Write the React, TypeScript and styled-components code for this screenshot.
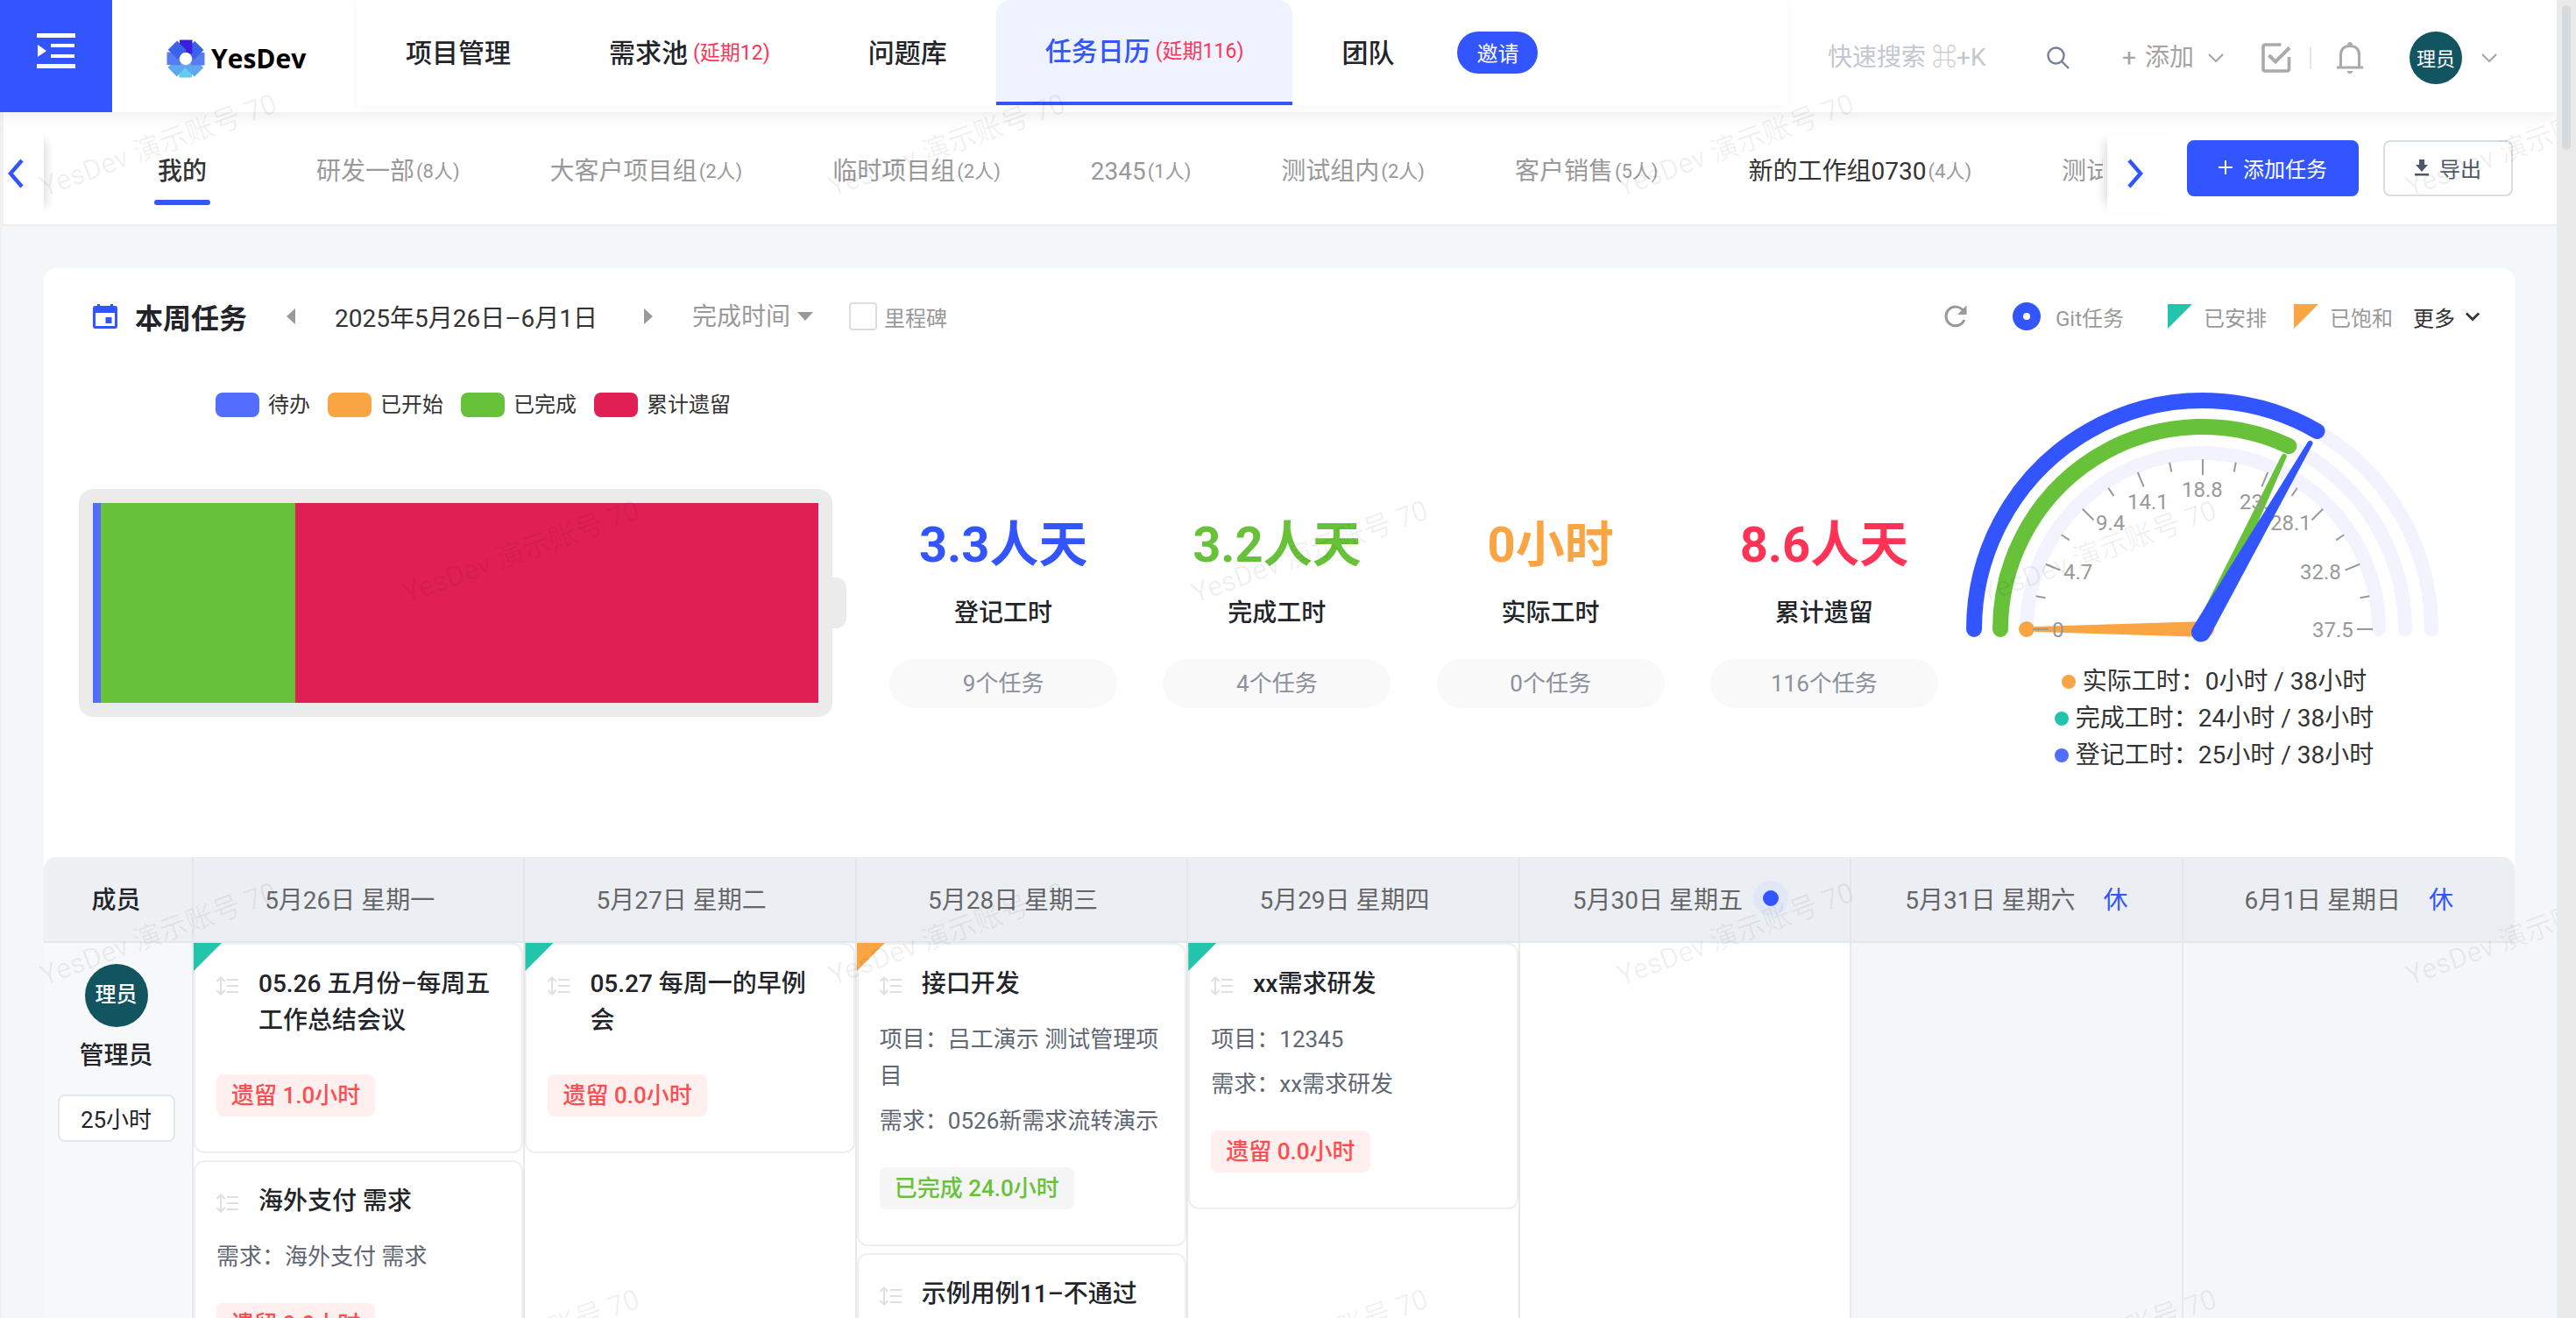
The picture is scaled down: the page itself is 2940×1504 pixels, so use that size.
import React from 'react';
import styled, { createGlobalStyle, css } from 'styled-components';

const BLUE = '#3355ff';
const GREEN = '#67c23a';
const ORANGE = '#f9a544';
const TEAL = '#22c4ab';
const RED = '#ff3355';

const GlobalStyle = createGlobalStyle`
  *, *::before, *::after { box-sizing: border-box; }
  html, body { margin: 0; padding: 0; }
  body {
    font-family: Roboto, "Noto Sans CJK SC", sans-serif;
    color: #222429;
    background: #f3f7fa;
    overflow: hidden;
  }
  button, input, select {
    font-family: inherit;
    margin: 0;
    padding: 0;
    border: 0;
    background: none;
    color: inherit;
  }
  button { cursor: pointer; }
  a { color: inherit; text-decoration: none; }
  svg { display: block; flex: none; }
`;

/* ---------- page frame ---------- */

const Shell = styled.div`
  position: relative;
  display: flex;
  height: 100vh;
  overflow: hidden;
`;

const Page = styled.div`
  flex: 1;
  min-width: 0;
  position: relative;
  overflow: hidden;
`;

const ScrollTrack = styled.div`
  flex: none;
  width: 22px;
  padding: 6px;
  background: #eaeaea;
`;

const ScrollThumb = styled.div`
  height: 165px;
  border-radius: 6px;
  background: #d5dade;
`;

/* ---------- header ---------- */

const Header = styled.header`
  position: relative;
  z-index: 2;
  display: flex;
  height: 128px;
  background: #fff;
  box-shadow: 0 4px 16px rgba(0, 0, 0, 0.08);
`;

const MenuButton = styled.button`
  display: flex;
  justify-content: center;
  width: 128px;
  padding-top: 36px;
  background: ${BLUE};
`;

const Logo = styled.a`
  display: flex;
  align-items: center;
  gap: 7px;
  width: 279px;
  padding: 6px 0 0 62px;
  font: 700 30px/40px "Open Sans", sans-serif;
  color: #000;
`;

const Nav = styled.nav`
  flex: 1;
  display: flex;
  align-items: flex-start;
  height: 120px;
  box-shadow: 0 2px 8px rgba(0, 0, 0, 0.04);
`;

const NavItem = styled.a<{ $active?: boolean }>`
  display: flex;
  align-items: center;
  gap: 6px;
  height: 120px;
  padding: 0 56px 4px;
  font-size: 30px;
  font-weight: 500;
  white-space: nowrap;
  ${p =>
    p.$active &&
    css`
      color: ${BLUE};
      background: #eff3ff;
      border-bottom: 4px solid ${BLUE};
      border-radius: 16px 16px 0 0;
    `}
`;

const Late = styled.span`
  font-size: 23px;
  font-weight: 400;
  color: ${RED};
`;

const InviteButton = styled.button`
  width: 92px;
  height: 48px;
  margin: 36px 0 0 16px;
  padding-bottom: 2px;
  border-radius: 24px;
  background: ${BLUE};
  color: #fff;
  font-size: 24px;
`;

const Tools = styled.div`
  display: flex;
  align-items: center;
  padding: 3px 68px 0 46px;
  color: #a3a3a3;
`;

const SearchInput = styled.input`
  width: 250px;
  height: 40px;
  font-size: 28px;
  outline: 0;
  &::placeholder { color: #c3c7ce; opacity: 1; }
`;

const IconButton = styled.button<{ $ml?: number }>`
  display: flex;
  align-items: center;
  margin-left: ${p => p.$ml ?? 0}px;
`;

const AddMenu = styled(IconButton)`
  gap: 16px;
  font-size: 28px;
  line-height: 40px;
`;

const AddText = styled.span`
  display: flex;
  gap: 10px;
`;

const Rule = styled.span`
  width: 2px;
  height: 26px;
  margin-left: 21px;
  background: #e4e7ed;
`;

const Avatar = styled.span<{ $size: number; $font: number }>`
  display: flex;
  align-items: center;
  justify-content: center;
  width: ${p => p.$size}px;
  height: ${p => p.$size}px;
  padding-bottom: 2px;
  border-radius: 50%;
  background: #125561;
  color: #fff;
  font-size: ${p => p.$font}px;
`;

/* ---------- group tabs ---------- */

const GroupBar = styled.div`
  display: flex;
  height: 130px;
  padding-right: 50px;
  background: #fff;
  border-left: 4px solid #f0f0f0;
  border-bottom: 2px solid #ededed;
`;

const ScrollArrow = styled.button<{ $side: 'left' | 'right' }>`
  flex: none;
  display: flex;
  align-items: center;
  width: ${p => (p.$side === 'left' ? 46 : 91)}px;
  height: 90px;
  margin-top: 25px;
  padding: 0 ${p => (p.$side === 'left' ? 4 : 22)}px;
  box-shadow: ${p => (p.$side === 'left' ? '10px 0 12px -8px' : '-10px 0 12px -8px')} rgba(0, 0, 0, 0.16);
`;

const Tabs = styled.div`
  flex: 1;
  min-width: 0;
  display: flex;
  overflow: hidden;
  padding: 47px 0 0 126px;
  margin-right: 5px;
`;

const Tab = styled.button<{ $active?: boolean; $dark?: boolean }>`
  flex: none;
  display: block;
  height: 60px;
  padding: 0 4px;
  margin-right: ${p => (p.$active ? 117 : 95)}px;
  font-size: 28px;
  line-height: 40px;
  font-weight: ${p => (p.$active ? 500 : 400)};
  color: ${p => (p.$active || p.$dark ? '#333' : '#999')};
  white-space: nowrap;
  &::after {
    content: '';
    display: block;
    height: 6px;
    margin: 12px -4px 0;
    border-radius: 3px;
    background: ${p => (p.$active ? BLUE : 'transparent')};
  }
`;

const Count = styled.span`
  margin-left: 2px;
  font-size: 22px;
  color: #999;
  vertical-align: 2px;
`;

const PrimaryButton = styled.button`
  flex: none;
  display: flex;
  align-items: center;
  justify-content: center;
  gap: 12px;
  width: 196px;
  height: 64px;
  margin-top: 32px;
  padding-bottom: 2px;
  border-radius: 8px;
  background: ${BLUE};
  color: #fff;
  font-size: 24px;
`;

const GhostButton = styled(PrimaryButton)`
  width: 148px;
  margin-left: 28px;
  border: 2px solid #d9dee3;
  background: #fff;
  color: #4f586b;
`;

/* ---------- week panel ---------- */

const Main = styled.main`
  padding: 48px 48px 0;
  border-left: 2px solid #f0f0f0;
`;

const Panel = styled.section`
  border-radius: 14px 14px 0 0;
  background: #fff;
`;

const Toolbar = styled.div`
  display: flex;
  align-items: center;
  height: 112px;
  padding: 0 40px 2px 56px;
  font-size: 24px;
  color: #999;
`;

const Title = styled.h1`
  margin: 0 0 0 20px;
  font-size: 32px;
  font-weight: 700;
  color: #222429;
`;

const StepButton = styled.button`
  display: flex;
  justify-content: center;
  width: 100px;
  color: #999;
`;

const DateText = styled.span`
  min-width: 308px;
  font-size: 28px;
  color: #333;
`;

const SortWrap = styled.label`
  display: flex;
  align-items: center;
  gap: 8px;
`;

const SortSelect = styled.select`
  appearance: none;
  width: 112px;
  font-size: 28px;
  color: #999;
`;

const CheckLabel = styled.label`
  display: flex;
  align-items: center;
  gap: 8px;
  margin-left: 41px;
`;

const CheckBox = styled.input`
  appearance: none;
  width: 32px;
  height: 32px;
  border: 2px solid #d9dee3;
  border-radius: 4px;
  background: #fff;
`;

const Spacer = styled.span`
  flex: 1;
`;

const Mark = styled.span<{ $gap: number; $ml: number }>`
  display: flex;
  align-items: center;
  gap: ${p => p.$gap}px;
  margin-left: ${p => p.$ml}px;
`;

const GitDot = styled.span`
  display: flex;
  align-items: center;
  justify-content: center;
  width: 32px;
  height: 32px;
  border-radius: 50%;
  background: ${BLUE};
  &::after {
    content: '';
    width: 8px;
    height: 8px;
    border-radius: 50%;
    background: #fff;
  }
`;

const Corner = styled.span<{ $color: string; $size: number }>`
  width: ${p => p.$size}px;
  height: ${p => p.$size}px;
  background: ${p => p.$color};
  clip-path: polygon(0 0, 100% 0, 0 100%);
`;

const MoreButton = styled.button`
  display: flex;
  align-items: center;
  gap: 12px;
  margin-left: 23px;
  font-size: 24px;
  color: #333;
`;

const Summary = styled.div`
  display: grid;
  grid-template-columns: 939fr 1249fr 552fr;
  height: 560px;
  padding-right: 80px;
`;

const Legend = styled.div`
  display: flex;
  gap: 20px;
  padding: 30px 0 0 196px;
  font-size: 24px;
  line-height: 28px;
  color: #333;
`;

const LegendItem = styled.span`
  display: flex;
  gap: 10px;
`;

const Swatch = styled.span<{ $color: string }>`
  width: 50px;
  height: 28px;
  border-radius: 8px;
  background: ${p => p.$color};
`;

const Battery = styled.div`
  display: flex;
  align-items: center;
  margin: 82px 23px 0 40px;
`;

const BatteryBody = styled.div`
  flex: 1;
  display: flex;
  height: 260px;
  border: 16px solid #ebebeb;
  border-radius: 16px;
  background: #ebebeb;
`;

const Segment = styled.div<{ $share: number; $color: string }>`
  flex: ${p => p.$share} 0 0;
  background: ${p => p.$color};
`;

const BatteryTip = styled.div`
  width: 16px;
  height: 58px;
  border-radius: 0 12px 12px 0;
  background: #ebebeb;
`;

const Stats = styled.div`
  display: grid;
  grid-template-columns: repeat(4, 1fr);
  padding-top: 164px;
`;

const Stat = styled.div`
  display: flex;
  flex-direction: column;
  align-items: center;
`;

const StatValue = styled.strong<{ $color: string }>`
  font-size: 56px;
  line-height: 80px;
  font-weight: 700;
  color: ${p => p.$color};
`;

const StatLabel = styled.span`
  margin-top: 18px;
  font-size: 28px;
  line-height: 40px;
  font-weight: 500;
`;

const StatPill = styled.span`
  width: 260px;
  margin-top: 32px;
  border-radius: 28px;
  background: #f9f9fa;
  font-size: 26px;
  line-height: 56px;
  text-align: center;
  color: #8a919d;
`;

const GaugeCol = styled.div`
  display: flex;
  flex-direction: column;
  align-items: center;
`;

const GaugeRows = styled.div`
  margin: 19px 0 0 26px;
  font-size: 28px;
  line-height: 42px;
  color: #333;
`;

const GaugeRow = styled.div`
  display: flex;
  align-items: center;
  justify-content: center;
  gap: 8px;
  white-space: pre;
`;

const Dot = styled.span<{ $color: string }>`
  width: 16px;
  height: 16px;
  border-radius: 50%;
  background: ${p => p.$color};
`;

/* ---------- calendar ---------- */

const Calendar = styled.table`
  width: 100%;
  table-layout: fixed;
  border-collapse: separate;
  border-spacing: 0;
  font-size: 28px;
`;

const HeadCell = styled.th`
  height: 98px;
  padding: 0 0 2px;
  border-right: 2px solid #e4e7ea;
  border-bottom: 2px solid #e4e6e8;
  background: #ebeff3;
  font-weight: 400;
  color: #666;
  &:first-child {
    width: 171px;
    padding-right: 4px;
    border-top-left-radius: 14px;
    background: #eef1f4;
    font-weight: 500;
    color: #222429;
  }
  &:last-child {
    border-right: 0;
    border-top-right-radius: 14px;
  }
`;

const DayLabel = styled.span<{ $plain: boolean }>`
  display: flex;
  align-items: center;
  justify-content: center;
  padding-right: ${p => (p.$plain ? 20 : 0)}px;
`;

const Rest = styled.span`
  margin-left: 32px;
  color: ${BLUE};
`;

const Today = styled.span`
  width: 40px;
  height: 40px;
  margin: 0 10px 0 12px;
  border: 11px solid #e2e7f8;
  border-radius: 50%;
  background: ${BLUE};
`;

const BodyCell = styled.td<{ $tone: string }>`
  height: 800px;
  padding: 0;
  border-right: 2px solid #e6e8ea;
  background: ${p => p.$tone};
  vertical-align: top;
  &:last-child { border-right: 0; }
`;

const Member = styled.div`
  display: flex;
  flex-direction: column;
  align-items: center;
  padding: 24px 4px 0 0;
  font-weight: 500;
  line-height: 40px;
`;

const MemberName = styled.span`
  margin-top: 13px;
`;

const Hours = styled.button`
  width: 134px;
  height: 54px;
  margin-top: 24px;
  padding-bottom: 2px;
  border: 2px solid #e4e7ea;
  border-radius: 8px;
  background: #fff;
  font-size: 26px;
  color: #222429;
`;

const DayColumn = styled.div`
  position: relative;
  display: flex;
  flex-direction: column;
  gap: 8px;
  & > ${Corner} {
    position: absolute;
    top: 0;
    left: 0;
  }
`;

const CardBox = styled.article`
  padding: 24px 24px 40px;
  border: 2px solid #eeeff0;
  border-radius: 12px;
  background: #fff;
`;

const CardHead = styled.div`
  display: flex;
  gap: 20px;
  padding-bottom: 8px;
`;

const CardTitle = styled.h2`
  width: 269px;
  margin: 0;
  font-size: 28px;
  line-height: 42px;
  font-weight: 500;
`;

const DragButton = styled(IconButton)`
  height: 46px;
  width: 28px;
`;

const CardLine = styled.p`
  margin: 9px 0 0;
  font-size: 26px;
  line-height: 42px;
  color: #606773;
`;

const Badge = styled.span<{ $done?: boolean }>`
  display: table;
  margin-top: 32px;
  padding: 0 17px;
  border-radius: 8px;
  font-size: 26px;
  line-height: 48px;
  font-weight: 500;
  color: ${p => (p.$done ? GREEN : '#ff4d4f')};
  background: ${p => (p.$done ? '#f5f5f5' : '#fff0ef')};
`;

/* ---------- watermark ---------- */

const WatermarkLayer = styled.div`
  position: absolute;
  inset: 0 22px 0 0;
  z-index: 5;
  overflow: hidden;
  pointer-events: none;
`;

const WatermarkText = styled.span`
  position: absolute;
  font: 32px/36px Roboto, "Noto Sans CJK SC", sans-serif;
  color: rgba(0, 0, 0, 0.06);
  white-space: nowrap;
  transform: rotate(-20deg);
  transform-origin: 0 100%;
`;

/* ---------- icons ---------- */

const Chevron = ({ w = 18, sw = 2 }: { w?: number; sw?: number }) => (
  <svg width={w} height={w} viewBox="0 0 18 18" fill="none" stroke="currentColor" strokeWidth={sw}>
    <path d="M1 5l8 8 8-8" />
  </svg>
);

const MenuIcon = () => (
  <svg width="44" height="44" viewBox="0 0 44 44" fill="#fff">
    <path d="M0 2h44v5H0zM16 14h27v4H16zM16 26h27v4H16zM0 37h44v5H0zM1 15l10 7-10 7z" />
  </svg>
);

const LogoMark = () => {
  const tones = ['#3a20dc', '#3b63ea', '#567cf0', '#5fa8ef', '#62cdee', '#5fa8ef', '#567cf0', '#3b63ea'];
  const order = [4, 3, 5, 2, 6, 1, 0, 7];
  return (
    <svg width="44" height="44" viewBox="-22 -22 44 44">
      {order.map(i => (
        <rect key={i} x="-7" y="-21.5" width="14.5" height="15.5" fill={tones[i]} transform={`rotate(${i * 45})`} />
      ))}
      <circle r="7.2" fill="#fff" />
    </svg>
  );
};

const SearchIcon = () => (
  <svg width="26" height="26" viewBox="0 0 26 26" fill="none" stroke="#76809a" strokeWidth="2.4">
    <circle cx="10.5" cy="10.5" r="9" />
    <path d="M17 17l8 8" />
  </svg>
);

const TaskIcon = () => (
  <svg width="34" height="34" viewBox="0 0 34 34" fill="none" stroke="#aaa" strokeWidth="3.6">
    <path d="M22.500 2H4.500Q2 2 2 4.500V29.500Q2 32 4.500 32H29Q31.500 32 31.500 29.500V16" />
    <path d="M8.500 14l7.500 7.500L32 5.500" strokeWidth="4" />
  </svg>
);

const BellIcon = () => (
  <svg width="32" height="38" viewBox="0 0 32 38" fill="none" stroke="#aaa" strokeWidth="3">
    <path d="M5.500 29V16Q5.500 5.500 16 5.500T26.500 16V29" />
    <path d="M1 30H31" />
    <path d="M13 4.500Q13 1 16 1T19 4.500z" fill="#aaa" stroke="none" />
    <path d="M12.500 34H19.500Q18.500 37 16 37T12.500 34z" fill="#aaa" stroke="none" />
  </svg>
);

const AngleIcon = ({ dir }: { dir: 'left' | 'right' }) => (
  <svg width="20" height="34" viewBox="0 0 20 34" fill="none" stroke={BLUE} strokeWidth="4.5">
    <path d={dir === 'left' ? 'M17 2L4 17L17 32' : 'M3 2L16 17L3 32'} />
  </svg>
);

const PlusIcon = () => (
  <svg width="16" height="16" viewBox="0 0 16 16" stroke="currentColor" strokeWidth="2">
    <path d="M8 0V16M0 8H16" />
  </svg>
);

const DownloadIcon = () => (
  <svg width="16" height="20" viewBox="0 0 16 20" fill="currentColor">
    <path d="M5 1h6v6h4l-7 8-7-8h4zM0 17h16v2.500H0z" />
  </svg>
);

const CalendarIcon = () => (
  <svg width="28" height="30" viewBox="0 0 28 30" fill={BLUE}>
    <path
      fillRule="evenodd"
      d="M5 1h3v2h12V1h3v2h2q3 0 3 3v20q0 3-3 3H3q-3 0-3-3V6q0-3 3-3h2zM3 11v15h22V11z"
    />
    <path d="M14.500 16h7v7h-7z" />
  </svg>
);

const Triangle = ({ dir }: { dir: 'left' | 'right' }) => (
  <svg width="10" height="18" viewBox="0 0 10 18" fill="currentColor">
    <path d={dir === 'left' ? 'M10 0v18L0 9z' : 'M0 0v18l10-9z'} />
  </svg>
);

const CaretIcon = () => (
  <svg width="18" height="10" viewBox="0 0 18 10" fill="#999">
    <path d="M0 0h18L9 10z" />
  </svg>
);

const RefreshIcon = () => (
  <svg width="26" height="26" viewBox="0 0 26 26" fill="none" stroke="#999" strokeWidth="3">
    <path d="M22.800 17A10.800 10.800 0 1 1 21.500 6.500" />
    <path d="M25.500 0.500V11H15z" fill="#999" stroke="none" />
  </svg>
);

const DragIcon = () => (
  <svg width="26" height="22" viewBox="0 0 26 22" fill="none" stroke="#dfe0e2" strokeWidth="2" strokeLinecap="round">
    <path d="M5 2v18M1 5.500L5 1.500L9 5.500M1 16.500L5 20.500L9 16.500M12.500 4H24.500M12.500 11H24.500M12.500 18H24.500" />
  </svg>
);

/* ---------- gauge ---------- */

const MAX_HOURS = 37.5;
const toAngle = (v: number) => Math.PI * (1 - v / MAX_HOURS);
const polar = (r: number, v: number) => [r * Math.cos(toAngle(v)), -r * Math.sin(toAngle(v))];

const Arc = ({ r, value, color, width }: { r: number; value: number; color: string; width: number }) => {
  const [x, y] = polar(r, value);
  return (
    <path
      d={`M${-r} 0A${r} ${r} 0 0 1 ${x} ${y}`}
      fill="none"
      stroke={color}
      strokeWidth={width}
      strokeLinecap="round"
    />
  );
};

const Needle = ({ len, value, color, base = 9 }: { len: number; value: number; color: string; base?: number }) => (
  <path
    d={`M${-base} 4A${base} ${base} 0 0 0 ${base} 4L3 ${-len}A3 3 0 0 0 -3 ${-len}Z`}
    fill={color}
    transform={`rotate(${(value / MAX_HOURS) * 180 - 90})`}
  />
);

const scaleLabels = [
  { text: '0', x: -172, y: 9 },
  { text: '4.7', x: -159, y: -57 },
  { text: '9.4', x: -122, y: -113 },
  { text: '14.1', x: -86, y: -137 },
  { text: '18.8', x: -24, y: -151 },
  { text: '23.4', x: 42, y: -137 },
  { text: '28.1', x: 77, y: -113 },
  { text: '32.8', x: 111, y: -57 },
  { text: '37.5', x: 125, y: 9 },
];

const Gauge = () => (
  <svg width="552" height="320" viewBox="-276 -300 552 320">
    {[261, 231, 201].map(r => (
      <Arc key={r} r={r} value={MAX_HOURS} color="#f2f3ff" width={16} />
    ))}
    <circle cx="-201" r="9" fill={ORANGE} />
    <Arc r={231} value={24} color={GREEN} width={18} />
    <Arc r={261} value={25} color={BLUE} width={18} />
    <Needle len={190} value={0} color={ORANGE} />
    <Needle len={218} value={24} color={GREEN} />
    {Array.from({ length: 17 }, (_, i) => {
      const v = (i / 16) * MAX_HOURS;
      const [x1, y1] = polar(194, v);
      const [x2, y2] = polar(i % 2 ? 183 : 176, v);
      return <line key={i} x1={x1} y1={y1} x2={x2} y2={y2} stroke="#999" strokeWidth="2" />;
    })}
    {scaleLabels.map(l => (
      <text key={l.text} x={l.x} y={l.y} fontSize="24" fill="#999">
        {l.text}
      </text>
    ))}
    <Needle len={245} value={25} color={BLUE} base={11} />
  </svg>
);

/* ---------- data ---------- */

const groups = [
  { name: '我的', active: true },
  { name: '研发一部', count: 8 },
  { name: '大客户项目组', count: 2 },
  { name: '临时项目组', count: 2 },
  { name: '2345', count: 1 },
  { name: '测试组内', count: 2 },
  { name: '客户销售', count: 5 },
  { name: '新的工作组0730', count: 4, dark: true },
  { name: '测试' },
];

const shares = [
  { label: '待办', share: 9, color: '#536dff' },
  { label: '已开始', share: 0, color: ORANGE },
  { label: '已完成', share: 222, color: GREEN },
  { label: '累计遗留', share: 597, color: '#e01f54' },
];

const stats = [
  { value: '3.3人天', label: '登记工时', tasks: '9个任务', color: BLUE },
  { value: '3.2人天', label: '完成工时', tasks: '4个任务', color: GREEN },
  { value: '0小时', label: '实际工时', tasks: '0个任务', color: ORANGE },
  { value: '8.6人天', label: '累计遗留', tasks: '116个任务', color: RED },
];

type Task = { title: string; lines?: string[]; badge: string; done?: boolean };
type Day = { label: string; today?: boolean; rest?: boolean; corner?: string; tasks?: Task[] };

const days: Day[] = [
  {
    label: '5月26日 星期一',
    corner: TEAL,
    tasks: [
      { title: '05.26 五月份–每周五工作总结会议', badge: '遗留 1.0小时' },
      { title: '海外支付 需求', lines: ['需求：海外支付 需求'], badge: '遗留 0.0小时' },
    ],
  },
  { label: '5月27日 星期二', corner: TEAL, tasks: [{ title: '05.27 每周一的早例会', badge: '遗留 0.0小时' }] },
  {
    label: '5月28日 星期三',
    corner: ORANGE,
    tasks: [
      {
        title: '接口开发',
        lines: ['项目：吕工演示 测试管理项目', '需求：0526新需求流转演示'],
        badge: '已完成 24.0小时',
        done: true,
      },
      { title: '示例用例11–不通过', badge: '遗留 0.0小时' },
    ],
  },
  {
    label: '5月29日 星期四',
    corner: TEAL,
    tasks: [{ title: 'xx需求研发', lines: ['项目：12345', '需求：xx需求研发'], badge: '遗留 0.0小时' }],
  },
  { label: '5月30日 星期五', today: true },
  { label: '5月31日 星期六', rest: true },
  { label: '6月1日 星期日', rest: true },
];

const TILE = 900;
const watermarks = [0, 1, 2, 3].flatMap(row =>
  [0, 1, 2, 3].map(col => ({
    left: (row % 2 ? 467 : 53) + col * TILE,
    top: (row % 2 ? 659 : 195) + Math.floor(row / 2) * TILE,
  })),
);

const TaskCard = ({ task }: { task: Task }) => (
  <CardBox>
    <CardHead>
      <DragButton aria-label="拖动排序">
        <DragIcon />
      </DragButton>
      <CardTitle>{task.title}</CardTitle>
    </CardHead>
    {task.lines?.map(l => (
      <CardLine key={l}>{l}</CardLine>
    ))}
    <Badge $done={task.done}>{task.badge}</Badge>
  </CardBox>
);

export default function App() {
  return (
    <Shell>
      <GlobalStyle />
      <Page>
        <Header>
          <MenuButton aria-label="展开菜单">
            <MenuIcon />
          </MenuButton>
          <Logo href="#">
            <LogoMark />
            YesDev
          </Logo>
          <Nav>
            <NavItem href="#">项目管理</NavItem>
            <NavItem href="#">
              需求池<Late>(延期12)</Late>
            </NavItem>
            <NavItem href="#">问题库</NavItem>
            <NavItem href="#" $active>
              任务日历<Late>(延期116)</Late>
            </NavItem>
            <NavItem href="#">团队</NavItem>
            <InviteButton>邀请</InviteButton>
          </Nav>
          <Tools>
            <SearchInput placeholder="快速搜索 ⌘+K" aria-label="快速搜索" />
            <IconButton aria-label="搜索">
              <SearchIcon />
            </IconButton>
            <AddMenu $ml={60}>
              <AddText>
                <span>+</span>
                <span>添加</span>
              </AddText>
              <Chevron />
            </AddMenu>
            <IconButton $ml={43} aria-label="我的任务">
              <TaskIcon />
            </IconButton>
            <Rule />
            <IconButton $ml={28} aria-label="通知">
              <BellIcon />
            </IconButton>
            <IconButton $ml={52} aria-label="账号">
              <Avatar $size={60} $font={22}>
                理员
              </Avatar>
            </IconButton>
            <IconButton $ml={22} aria-label="账号菜单">
              <Chevron />
            </IconButton>
          </Tools>
        </Header>

        <GroupBar>
          <ScrollArrow $side="left" aria-label="向左">
            <AngleIcon dir="left" />
          </ScrollArrow>
          <Tabs>
            {groups.map(g => (
              <Tab key={g.name} $active={g.active} $dark={g.dark}>
                {g.name}
                {g.count && <Count>({g.count}人)</Count>}
              </Tab>
            ))}
          </Tabs>
          <ScrollArrow $side="right" aria-label="向右">
            <AngleIcon dir="right" />
          </ScrollArrow>
          <PrimaryButton>
            <PlusIcon />
            添加任务
          </PrimaryButton>
          <GhostButton>
            <DownloadIcon />
            导出
          </GhostButton>
        </GroupBar>

        <Main>
          <Panel>
            <Toolbar>
              <CalendarIcon />
              <Title>本周任务</Title>
              <StepButton aria-label="上一周">
                <Triangle dir="left" />
              </StepButton>
              <DateText>2025年5月26日–6月1日</DateText>
              <StepButton aria-label="下一周">
                <Triangle dir="right" />
              </StepButton>
              <SortWrap>
                <SortSelect aria-label="时间类型">
                  <option>完成时间</option>
                </SortSelect>
                <CaretIcon />
              </SortWrap>
              <CheckLabel>
                <CheckBox type="checkbox" />
                里程碑
              </CheckLabel>
              <Spacer />
              <IconButton aria-label="刷新">
                <RefreshIcon />
              </IconButton>
              <Mark $gap={17} $ml={52}>
                <GitDot />
                Git任务
              </Mark>
              <Mark $gap={13} $ml={50}>
                <Corner $color={TEAL} $size={28} />
                已安排
              </Mark>
              <Mark $gap={13} $ml={31}>
                <Corner $color={ORANGE} $size={28} />
                已饱和
              </Mark>
              <MoreButton>
                更多
                <Chevron w={16} sw={3} />
              </MoreButton>
            </Toolbar>

            <Summary>
              <div>
                <Legend>
                  {shares.map(s => (
                    <LegendItem key={s.label}>
                      <Swatch $color={s.color} />
                      {s.label}
                    </LegendItem>
                  ))}
                </Legend>
                <Battery>
                  <BatteryBody>
                    {shares.map(s => (
                      <Segment key={s.label} $share={s.share} $color={s.color} />
                    ))}
                  </BatteryBody>
                  <BatteryTip />
                </Battery>
              </div>
              <Stats>
                {stats.map(s => (
                  <Stat key={s.label}>
                    <StatValue $color={s.color}>{s.value}</StatValue>
                    <StatLabel>{s.label}</StatLabel>
                    <StatPill>{s.tasks}</StatPill>
                  </Stat>
                ))}
              </Stats>
              <GaugeCol>
                <Gauge />
                <GaugeRows>
                  <GaugeRow>
                    <Dot $color={ORANGE} />
                    实际工时：0小时 / 38小时
                  </GaugeRow>
                  <GaugeRow>
                    <Dot $color={TEAL} />
                    完成工时：24小时 / 38小时
                  </GaugeRow>
                  <GaugeRow>
                    <Dot $color="#536dff" />
                    登记工时：25小时 / 38小时
                  </GaugeRow>
                </GaugeRows>
              </GaugeCol>
            </Summary>

            <Calendar>
              <thead>
                <tr>
                  <HeadCell>成员</HeadCell>
                  {days.map(d => (
                    <HeadCell key={d.label}>
                      <DayLabel $plain={!d.today && !d.rest}>
                        {d.label}
                        {d.today && <Today />}
                        {d.rest && <Rest>休</Rest>}
                      </DayLabel>
                    </HeadCell>
                  ))}
                </tr>
              </thead>
              <tbody>
                <tr>
                  <BodyCell $tone="#f7f8fa">
                    <Member>
                      <Avatar $size={72} $font={24}>
                        理员
                      </Avatar>
                      <MemberName>管理员</MemberName>
                      <Hours>25小时</Hours>
                    </Member>
                  </BodyCell>
                  {days.map(d => (
                    <BodyCell key={d.label} $tone={d.rest ? '#f3f7fa' : '#fff'}>
                      <DayColumn>
                        {d.tasks?.map(t => (
                          <TaskCard key={t.title} task={t} />
                        ))}
                        {d.corner && <Corner $color={d.corner} $size={32} />}
                      </DayColumn>
                    </BodyCell>
                  ))}
                </tr>
              </tbody>
            </Calendar>
          </Panel>
        </Main>
      </Page>
      <ScrollTrack>
        <ScrollThumb />
      </ScrollTrack>
      <WatermarkLayer aria-hidden="true">
        {watermarks.map(w => (
          <WatermarkText key={`${w.left}-${w.top}`} style={{ left: w.left, top: w.top }}>
            YesDev 演示账号 70
          </WatermarkText>
        ))}
      </WatermarkLayer>
    </Shell>
  );
}
